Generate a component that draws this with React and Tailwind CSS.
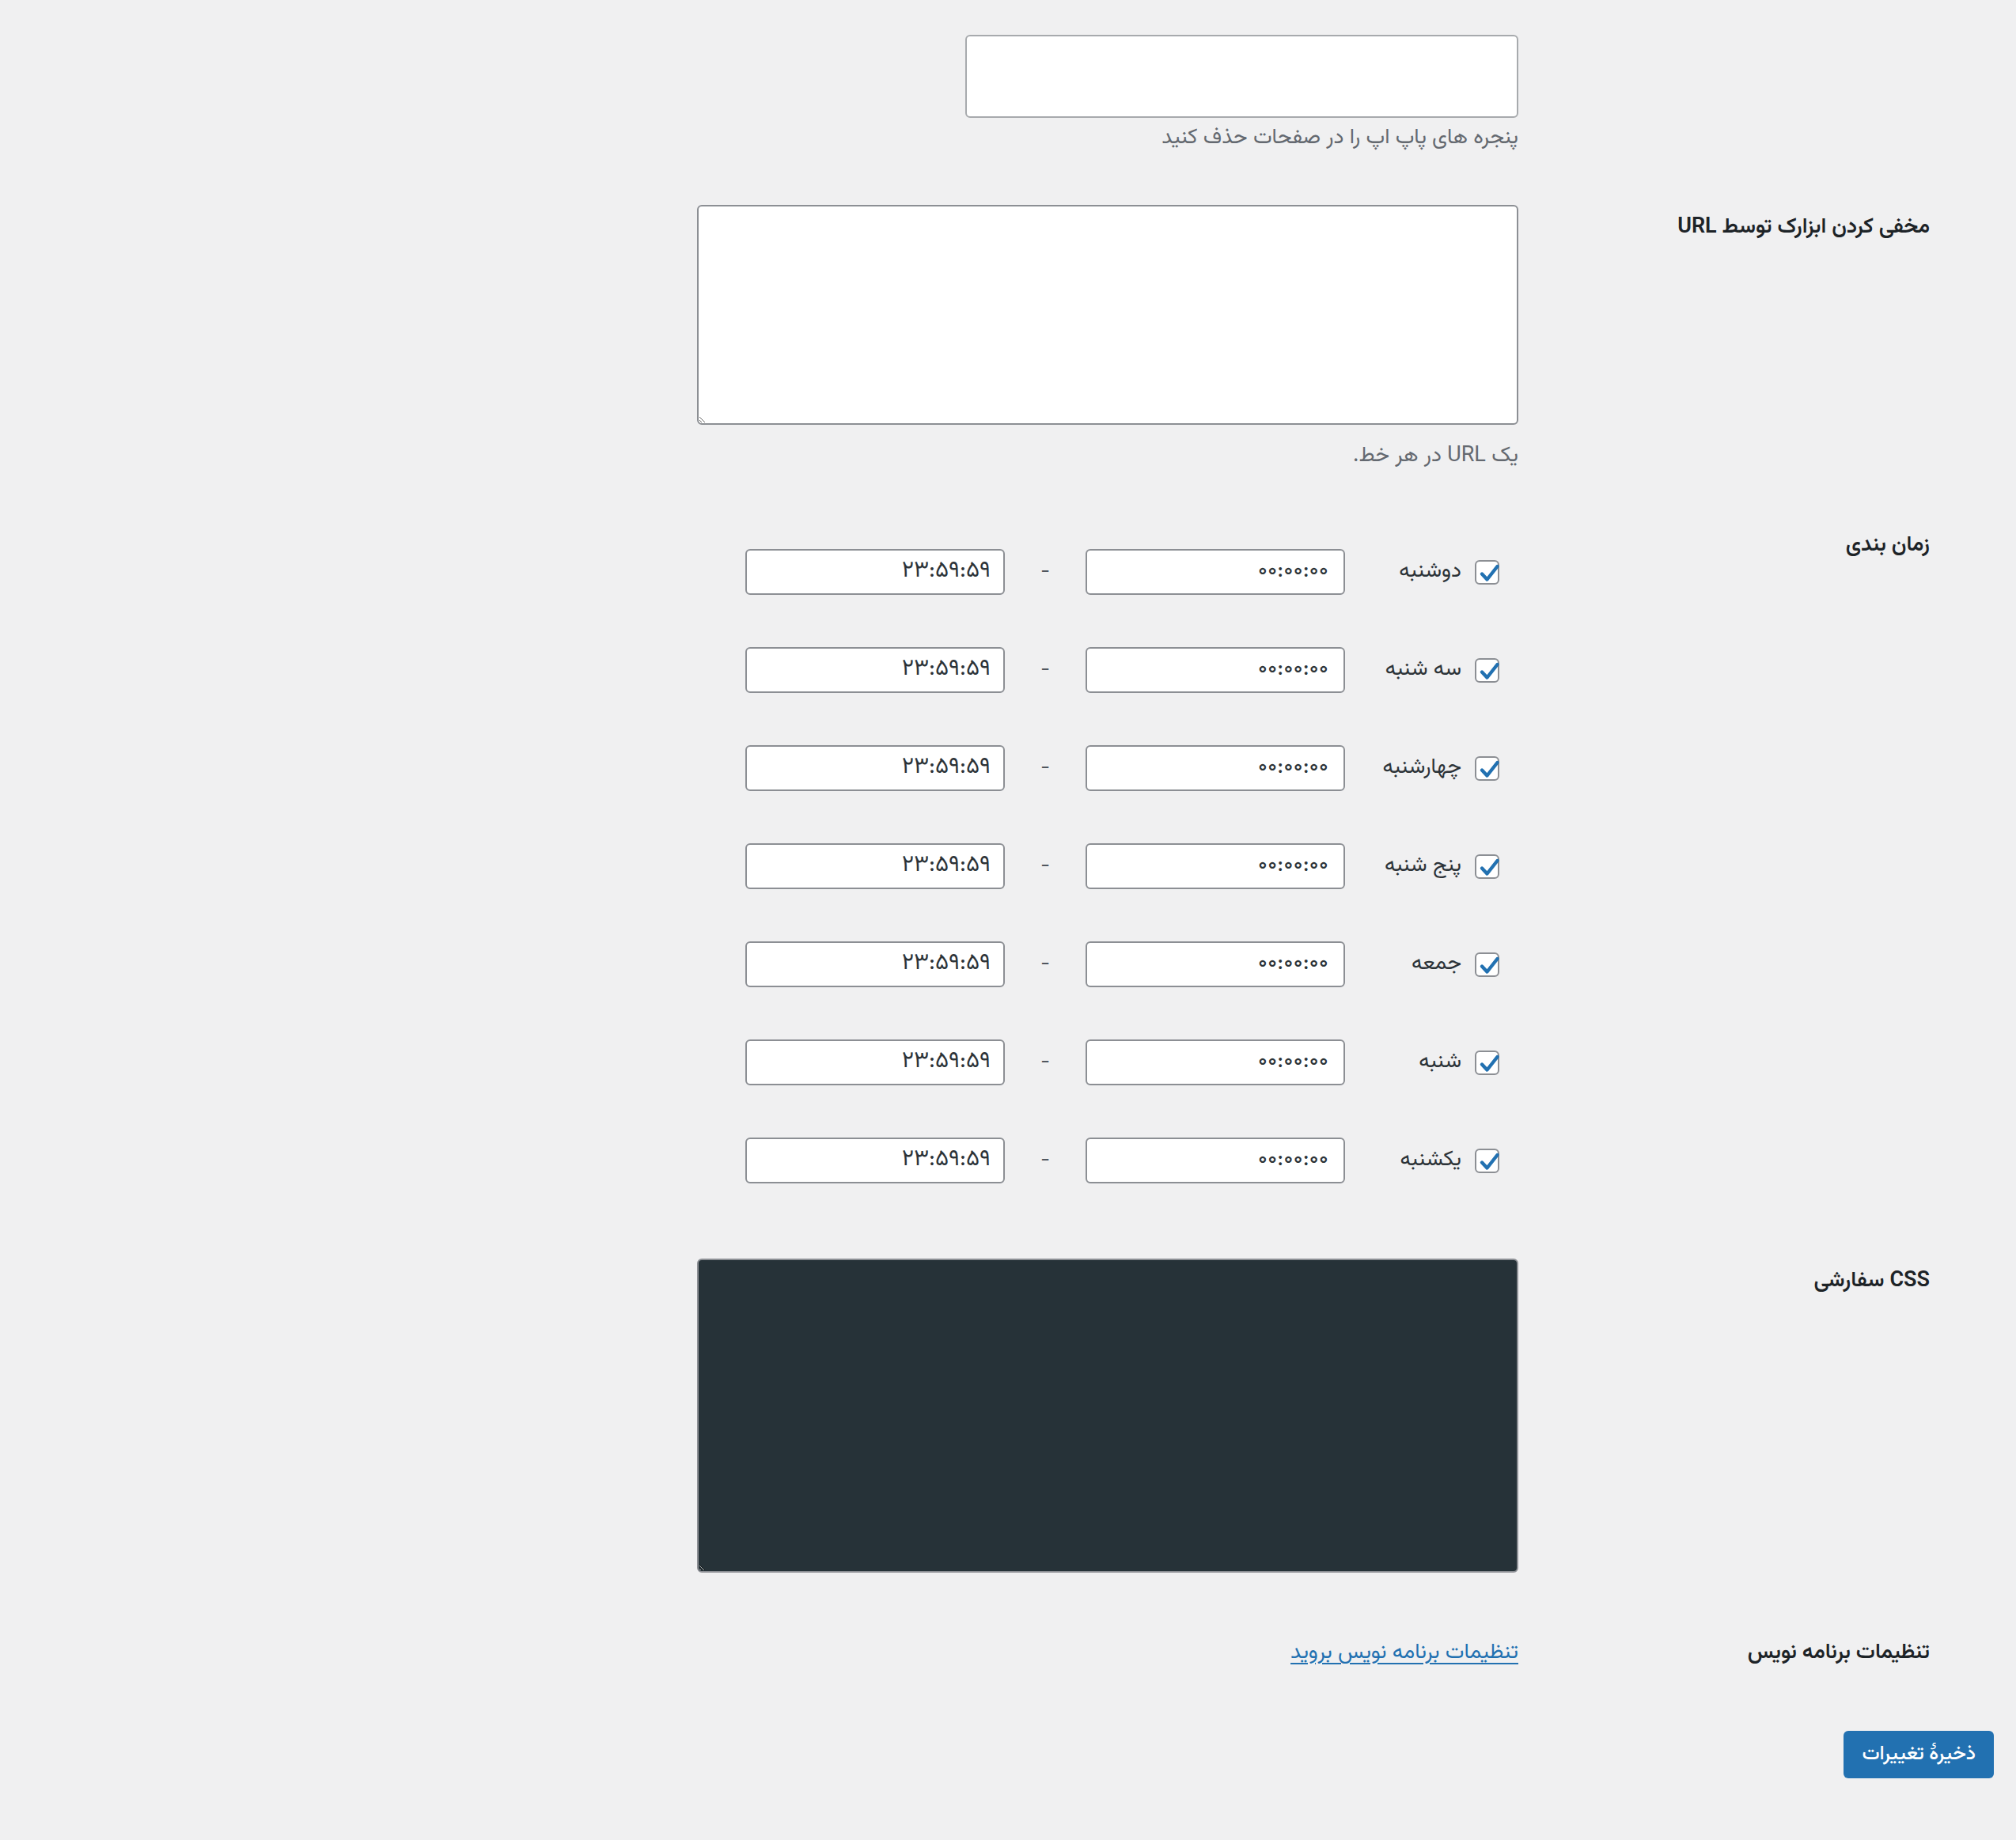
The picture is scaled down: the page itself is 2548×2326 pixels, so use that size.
import React from "react";

const FONT = { fontFamily: '"Vazirmatn", "Noto Sans Arabic", "DejaVu Sans", sans-serif' };

const days = ["دوشنبه", "سه شنبه", "چهارشنبه", "پنج شنبه", "جمعه", "شنبه", "یکشنبه"];

function Check() {
  return (
    <div className="relative w-[31px] h-[31px] shrink-0 rounded-[6px] border-2 border-[#8c8f94] bg-white">
      <svg className="absolute left-[2px] top-[1px]" width="28" height="28" viewBox="0 0 28 28">
        <path d="M5 14.5 L11.5 21.5 L24.5 5" fill="none" stroke="#2271b1" strokeWidth="4.4" strokeLinecap="round" strokeLinejoin="round" />
      </svg>
    </div>
  );
}

function TimeBox({ value, pr }) {
  return (
    <div className={`w-[328px] h-[58px] shrink-0 rounded-[6px] border-2 border-[#8c8f94] bg-white flex items-center ${pr} text-[29px] text-[#2c3338]`}>
      {value}
    </div>
  );
}

function Label({ children }) {
  return (
    <div className="w-[520px] shrink-0 pt-[11px] text-[27px] leading-[36px] font-semibold text-[#1d2327]">
      {children}
    </div>
  );
}

export default function App() {
  return (
    <div dir="rtl" style={FONT} className="min-h-[2326px] w-[2548px] bg-[#f0f0f1] pr-[28px] pt-[44px] text-[#1d2327]">
      <div className="pr-[81px]">
        {/* Row 1 */}
        <div className="flex">
          <div className="w-[520px] shrink-0" />
          <div className="w-[1038px]">
            <div className="w-[699px] h-[105px] rounded-[6px] border-2 border-[#a7aaad] bg-white" />
            <p className="mt-[8px] text-[27px] leading-[36px] text-[#646970]">پنجره های پاپ اپ را در صفحات حذف کنید</p>
          </div>
        </div>

        {/* Row 2 */}
        <div className="flex mt-[66px]">
          <Label>مخفی کردن ابزارک توسط URL</Label>
          <div className="w-[1038px]">
            <textarea className="block w-[1038px] h-[278px] rounded-[6px] border-2 border-[#8c8f94] bg-white resize-y outline-none" />
            <p className="mt-[22px] text-[27px] leading-[36px] text-[#646970]">یک URL در هر خط.</p>
          </div>
        </div>

        {/* Row 3 - schedule */}
        <div className="flex mt-[66px]">
          <Label>زمان بندی</Label>
          <div className="w-[1038px] flex flex-col">
            {days.map((d) => (
              <div key={d} className="h-[124px] flex items-center pr-[24px]">
                <Check />
                <div className="w-[164px] shrink-0 pr-[17px] text-[27px] text-[#2c3338]">{d}</div>
                <TimeBox value="۰۰:۰۰:۰۰" pr="pr-[19px]" />
                <div className="w-[102px] shrink-0 text-center text-[25px] text-[#50575e]">-</div>
                <TimeBox value="۲۳:۵۹:۵۹" pr="pr-[16px]" />
              </div>
            ))}
          </div>
        </div>

        {/* Row 4 - CSS */}
        <div className="flex mt-[62px]">
          <Label>CSS سفارشی</Label>
          <div className="w-[1038px]">
            <textarea className="block w-[1038px] h-[397px] rounded-[6px] border-2 border-[#8c8f94] bg-[#263238] resize-y outline-none [color-scheme:dark]" />
          </div>
        </div>

        {/* Row 5 */}
        <div className="flex mt-[73px]">
          <Label>تنظیمات برنامه نویس</Label>
          <div className="w-[1038px] pt-[11px] text-[27px] leading-[36px]">
            <a href="#" className="text-[#2271b1] underline underline-offset-[6px]">تنظیمات برنامه نویس بروید</a>
          </div>
        </div>
      </div>

      <div className="mt-[80px] flex">
        <button className="h-[60px] px-[23px] rounded-[6px] bg-[#2271b1] text-white text-[25px] font-medium">ذخیرهٔ تغییرات</button>
      </div>
    </div>
  );
}
